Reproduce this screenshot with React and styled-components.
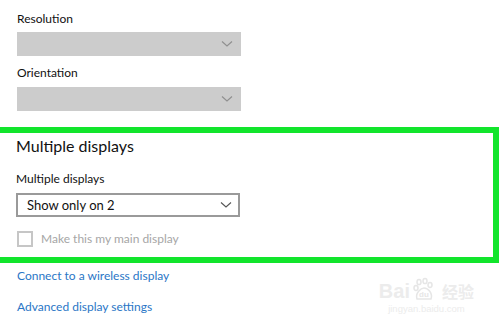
import React from 'react';
import styled, { createGlobalStyle } from 'styled-components';

const Global = createGlobalStyle`
  html, body {
    margin: 0;
    padding: 0;
    background: #ffffff;
  }
  body {
    font-family: Lato, "Noto Sans", sans-serif;
    color: #111111;
  }
`;

const Page = styled.div`
  position: relative;
  width: 500px;
  height: 322px;
  overflow: hidden;
  background: #fff;
  display: flex;
  flex-direction: column;
`;

const Block = styled.div`
  display: flex;
  flex-direction: column;
  padding-left: 17px;
`;

const Label = styled.div`
  font-size: 12px;
  line-height: 18px;
  color: #111111;
  margin-top: ${(p) => p.$top || 0}px;
  margin-bottom: ${(p) => p.$bottom || 0}px;
`;

const Select = styled.div`
  box-sizing: border-box;
  width: 224px;
  height: 24px;
  display: flex;
  align-items: center;
  justify-content: space-between;
  padding: 0 6px 0 9px;
  background: ${(p) => (p.$disabled ? '#cccccc' : '#ffffff')};
  border: 2px solid ${(p) => (p.$disabled ? '#cccccc' : '#9a9a9a')};
  font-size: 13px;
  color: #111111;
`;

const Chevron = ({ color }) => (
  <svg width="12" height="8" viewBox="0 0 12 8">
    <path d="M1 1.5 L6 6 L11 1.5" fill="none" stroke={color} strokeWidth="1.1" />
  </svg>
);

const Highlight = styled.section`
  box-sizing: border-box;
  width: 499px;
  margin-top: 16px;
  border: 6px solid #12e52c;
  border-left: 0;
  padding: 2px 0 10px 16px;
  display: flex;
  flex-direction: column;
`;

const Heading = styled.div`
  font-size: 16px;
  line-height: 22px;
  color: #111111;
`;

const CheckRow = styled.label`
  display: flex;
  align-items: center;
  gap: 8px;
  margin-top: 14px;
  padding-left: 1px;
  font-size: 12px;
  line-height: 16px;
  color: #a6a6a6;
`;

const Box = styled.span`
  box-sizing: border-box;
  width: 16px;
  height: 16px;
  border: 2px solid #c6c6c6;
  background: #fff;
`;

const Links = styled.div`
  display: flex;
  flex-direction: column;
  gap: 13px;
  padding: 4px 0 0 17px;
`;

const Link = styled.a`
  font-size: 12px;
  line-height: 18px;
  color: #2a76c6;
  text-decoration: none;
`;

const Watermark = styled.div`
  position: absolute;
  right: 26px;
  bottom: 8px;
  display: flex;
  flex-direction: column;
  align-items: center;
  color: #ececec;
  font-family: "Liberation Sans", sans-serif;
  pointer-events: none;
`;

const MarkTop = styled.div`
  display: flex;
  align-items: flex-end;
  gap: 2px;
  font-size: 20px;
  font-weight: bold;
  line-height: 20px;
  span.cn {
    font-family: "Noto Sans CJK SC", sans-serif;
    font-size: 16px;
    margin-left: 4px;
  }
`;

const MarkUrl = styled.div`
  font-size: 9.5px;
  margin-top: 2px;
`;

export default function App() {
  return (
    <Page>
      <Global />
      <Block>
        <Label $top={10} $bottom={4}>Resolution</Label>
        <Select $disabled>
          <span />
          <Chevron color="#8f8f8f" />
        </Select>
        <Label $top={8} $bottom={5}>Orientation</Label>
        <Select $disabled>
          <span />
          <Chevron color="#8f8f8f" />
        </Select>
      </Block>
      <Highlight>
        <Heading>Multiple displays</Heading>
        <Label $top={13} $bottom={5}>Multiple displays</Label>
        <Select>
          <span>Show only on 2</span>
          <Chevron color="#555555" />
        </Select>
        <CheckRow>
          <Box />
          Make this my main display
        </CheckRow>
      </Highlight>
      <Links>
        <Link>Connect to a wireless display</Link>
        <Link>Advanced display settings</Link>
      </Links>
      <Watermark>
        <MarkTop>
          <span>Bai</span>
          <svg width="24" height="24" viewBox="0 0 24 24">
            <g fill="none" stroke="#e6e6e6" strokeWidth="1.5">
              <ellipse cx="7" cy="5" rx="2" ry="2.6" />
              <ellipse cx="13" cy="4" rx="2" ry="2.6" />
              <ellipse cx="18" cy="8" rx="2" ry="2.4" />
              <ellipse cx="4" cy="11" rx="2" ry="2.4" />
              <path d="M5 22 C3 16 9 11 12 11 C16 11 21 16 19 22 Z" />
            </g>
            <text x="12" y="20" fontSize="8" textAnchor="middle" fill="#e6e6e6">du</text>
          </svg>
          <span className="cn">经验</span>
        </MarkTop>
        <MarkUrl>jingyan.baidu.com</MarkUrl>
      </Watermark>
    </Page>
  );
}
